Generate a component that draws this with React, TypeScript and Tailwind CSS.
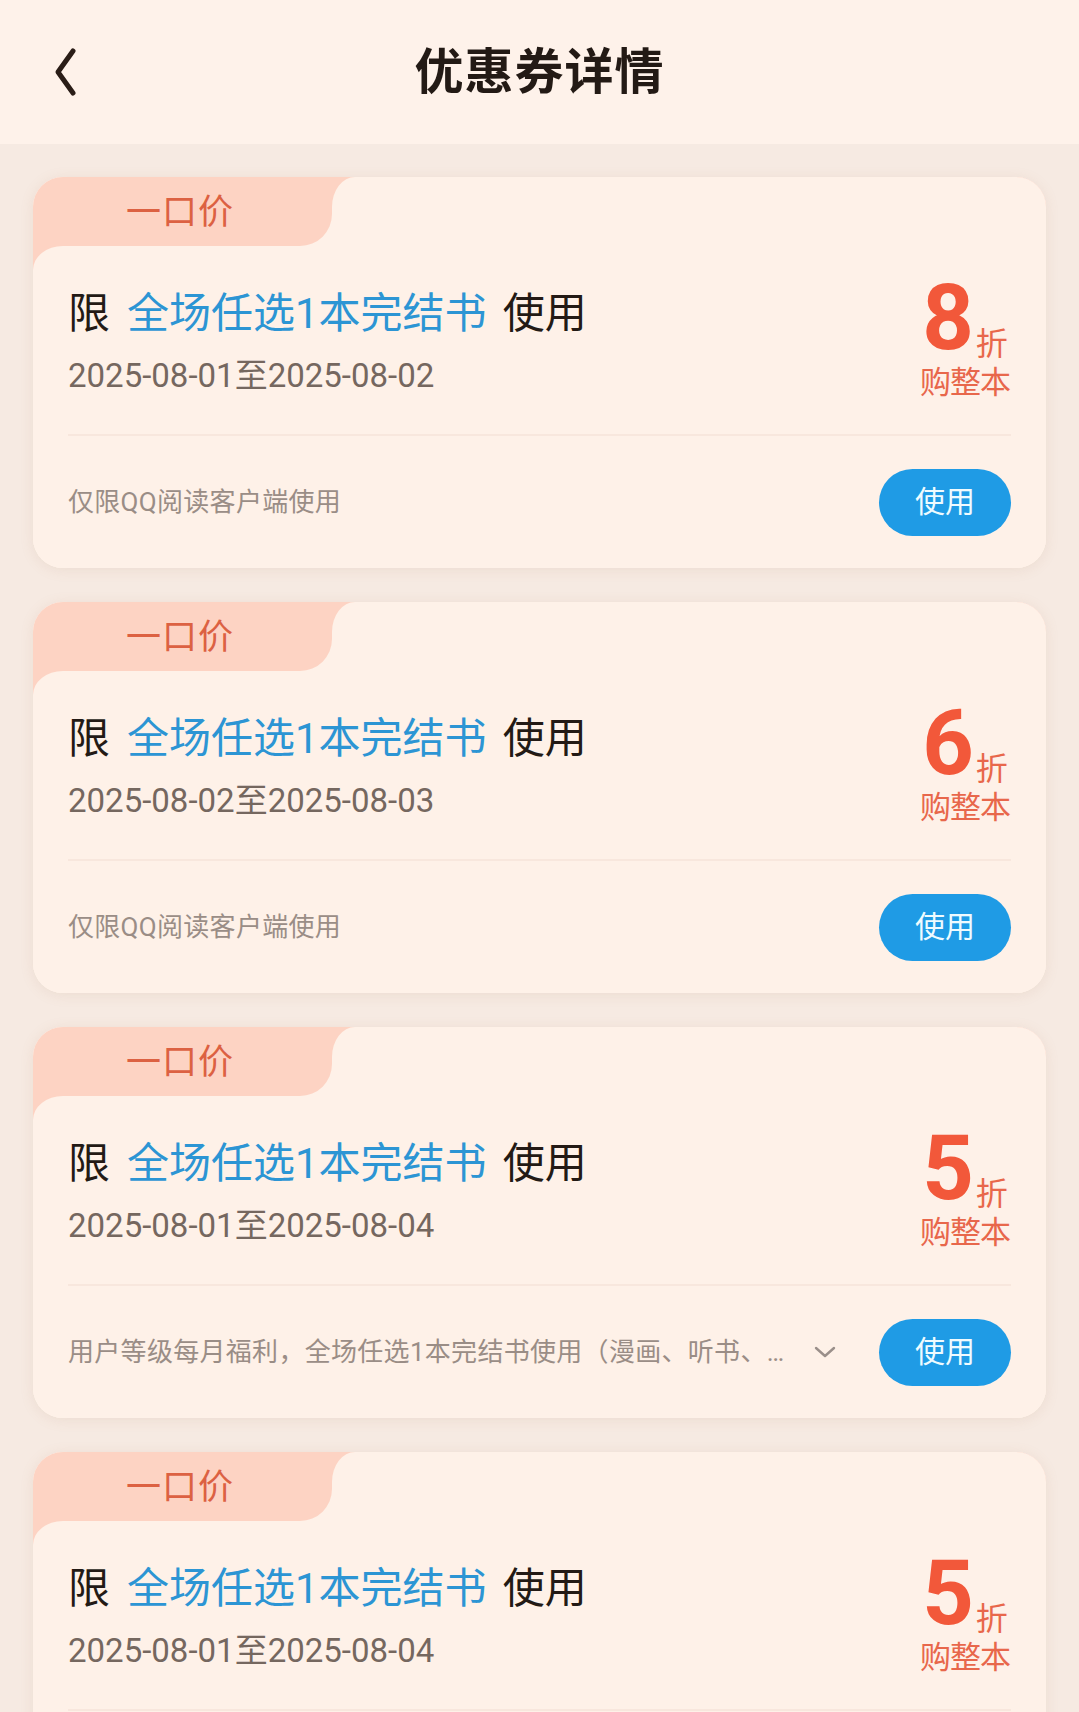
const coupons = [
  { rate: "8", start: "2025-08-01", end: "2025-08-02", note: "仅限QQ阅读客户端使用", more: false },
  { rate: "6", start: "2025-08-02", end: "2025-08-03", note: "仅限QQ阅读客户端使用", more: false },
  {
    rate: "5",
    start: "2025-08-01",
    end: "2025-08-04",
    note: "用户等级每月福利，全场任选1本完结书使用（漫画、听书、…",
    more: true,
  },
  { rate: "5", start: "2025-08-01", end: "2025-08-04", note: "仅限QQ阅读客户端使用", more: false },
];

const font = { fontFamily: 'Roboto, "Noto Sans CJK SC", sans-serif' };

function CouponCard({ c }: { c: (typeof coupons)[number] }) {
  return (
    <div className="shrink-0 rounded-[30px] overflow-hidden bg-[#fef1e8] shadow-[0_2px_14px_rgba(170,120,90,0.12)]">
      {/* tab */}
      <div className="flex h-[69px] bg-[#fef1e8]">
        <div className="w-[299px] h-full bg-[#fdd3c3] rounded-br-[32px] flex items-center pl-[93px] pt-[2px]">
          <span className="text-[35px] leading-none text-[#dc6142] tracking-[1px]">一口价</span>
        </div>
        <div className="flex-1 bg-[#fdd3c3]">
          <div className="h-full bg-[#fef1e8] rounded-tl-[23px_30px]" />
        </div>
      </div>

      {/* body */}
      <div className="bg-[linear-gradient(#fdd3c3_40px,#fef1e8_40px)]">
        <div className="bg-[#fef1e8] rounded-tl-[30px_24px] px-[35px]">
          <div className="flex items-start justify-between h-[188px]">
            <div className="pt-[44px]">
              <div className="text-[42px] leading-[48px] text-[#231a15] whitespace-nowrap">
                限<span className="ml-[17px] mr-[16px] text-[#2c95d4]">全场任选1本完结书</span>使用
              </div>
              <div className="mt-[18px] text-[33px] leading-[40px] text-[#75675f]">
                {c.start}至{c.end}
              </div>
            </div>
            <div className="flex flex-col items-center pt-[28px] pr-[1px]">
              <div className="flex items-end">
                <span className="text-[90px] leading-[90px] font-bold text-[#f2583a]">{c.rate}</span>
                <span className="text-[32px] leading-[36px] text-[#e8674b] ml-[2px] mb-[2px]">折</span>
              </div>
              <span className="mt-[1px] text-[31px] leading-[36px] text-[#e8674b] tracking-[-1px]">购整本</span>
            </div>
          </div>
          <div className="h-[2px] bg-[#f8e7dd]" />
          <div className="flex items-center h-[132px]">
            <div className="flex-1 flex items-center min-w-0">
              <span className="text-[26px] leading-none text-[#9a8d86] whitespace-nowrap tracking-[0.3px]">
                {c.note}
              </span>
              {c.more && (
                <svg
                  className="ml-[30px] shrink-0"
                  width="22"
                  height="14"
                  viewBox="0 0 22 14"
                  fill="none"
                  stroke="#9a8f8a"
                  strokeWidth="2.4"
                  strokeLinecap="round"
                  strokeLinejoin="round"
                >
                  <path d="M2 3l9 8 9-8" />
                </svg>
              )}
            </div>
            <button className="w-[132px] h-[67px] rounded-full bg-[#1f9be5] text-[#effbff] text-[30px] leading-none">
              使用
            </button>
          </div>
        </div>
      </div>
    </div>
  );
}

export default function App() {
  return (
    <div className="w-[1079px] h-[1712px] overflow-hidden bg-[#f6eae2] flex flex-col" style={font}>
      {/* header */}
      <header className="h-[144px] shrink-0 bg-[#fef2ea] flex items-center relative">
        <svg
          className="ml-[52px]"
          width="26"
          height="50"
          viewBox="0 0 26 50"
          fill="none"
          stroke="#2a1d17"
          strokeWidth="5"
          strokeLinecap="round"
          strokeLinejoin="round"
        >
          <path d="M21 4L6 25l15 21" />
        </svg>
        <h1 className="absolute left-0 right-0 text-center text-[49px] leading-none font-bold text-[#231a15] tracking-[1px]">
          优惠券详情
        </h1>
      </header>

      <main className="flex flex-col gap-[34px] px-[33px] pt-[33px]">
        {coupons.map((c, i) => (
          <CouponCard key={i} c={c} />
        ))}
      </main>
    </div>
  );
}
